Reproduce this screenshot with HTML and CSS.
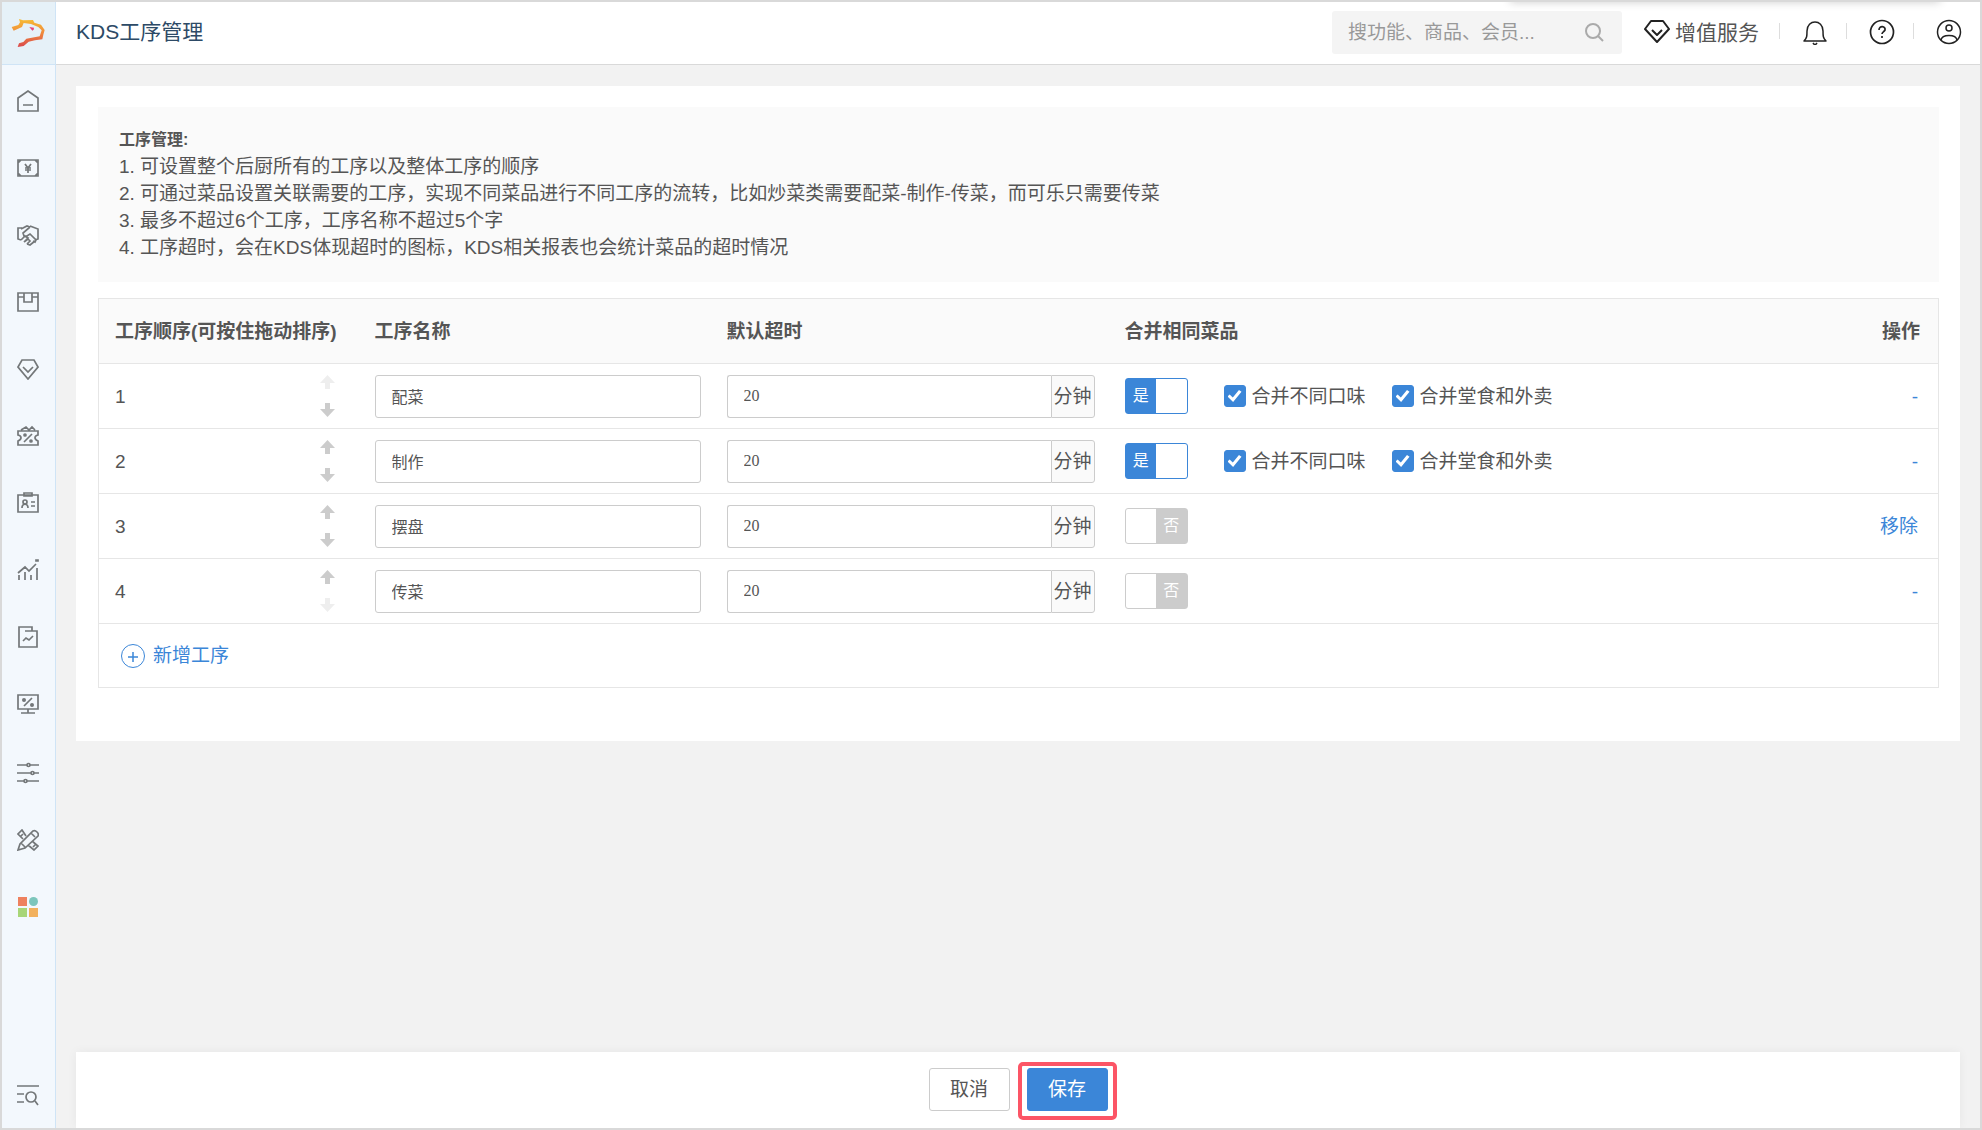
FILE: index.html
```html
<!DOCTYPE html>
<html lang="zh-CN">
<head>
    <meta charset="UTF-8">
    <meta name="viewport" content="width=device-width, initial-scale=1.0">
    <title>KDS工序管理</title>
    <link rel="stylesheet" href="styles.css">
</head>
<body>
    <!-- Sidebar -->
    <aside class="sidebar">
        <a href="#" class="logo" aria-label="首页">
            <svg width="34" height="30" viewBox="0 0 102 90" fill="none" stroke-linejoin="round">
                <defs>
                    <linearGradient id="logoGrad" x1="0" y1="0" x2="0" y2="1">
                        <stop offset="0" stop-color="#f6bd35"/>
                        <stop offset="0.5" stop-color="#f08a3c"/>
                        <stop offset="1" stop-color="#d9484d"/>
                    </linearGradient>
                </defs>
                <path fill="url(#logoGrad)" d="M2 27 L22 21 L27 13 L24 3 L36 7 L66 6 L70 14 L90 20 L101 36 L97 50 L94 64 L72 67 L53 71 L38 84 L20 87 L24 76 L37 72 L46 62 L86 55 L92 37 L82 27 L60 18 L38 15 L33 27 L8 38 Z"/>
                <path fill="#e8457a" d="M55 27 L69 29 L68 35 L64 38 Z"/>
            </svg>
        </a>
        <nav class="side-nav">
            <a href="#" class="side-item" aria-label="首页">
                <svg class="icon" viewBox="0 0 22 22"><path d="M1 21V8L11 1l10 7v13zM6 15h10"/></svg>
            </a>
            <a href="#" class="side-item" aria-label="收银">
                <svg class="icon" viewBox="0 0 22 22"><path d="M1 3h20v16H1zM1 6l3-3M18 3l3 3M1 16l3 3M18 19l3-3M8 7l3 4 3-4M11 11v5M8 11h6M8 13h6"/></svg>
            </a>
            <a href="#" class="side-item" aria-label="合作">
                <svg class="icon" viewBox="0 0 22 22"><path d="M5 4H1v11l3 1M4 5l6-3 3 1M13 2l8 3v10l-3 1M13 3L6 9l1 3h3l3-2 6 6-1 2-2-1M4 16l4-4 3 2-4 4M7 18l4-3 2 2-3 3M10 20l3 1 5-4"/></svg>
            </a>
            <a href="#" class="side-item" aria-label="商品">
                <svg class="icon" viewBox="0 0 22 22"><path d="M1 2h20v18H1zM1 6h6M15 6h6M7 2v9h8V2"/></svg>
            </a>
            <a href="#" class="side-item" aria-label="会员">
                <svg class="icon" viewBox="0 0 22 22"><path d="M5 2h12l4 7-10 12L1 9zM6 9l5 5 5-5"/></svg>
            </a>
            <a href="#" class="side-item" aria-label="优惠券">
                <svg class="icon" viewBox="0 0 22 22"><path d="M1 6h20v4c-4 1-4 4 0 6v4H1v-4c4-2 4-5 0-6zM4 5l5-3 3 3 3-3 3 3M7 17l8-8"/><circle cx="8" cy="10" r="1"/><circle cx="14" cy="16" r="1"/></svg>
            </a>
            <a href="#" class="side-item" aria-label="员工">
                <svg class="icon" viewBox="0 0 22 22"><path d="M1 3h20v17H1zM7 1h8v3H7zM5 16c0-5 6-5 6 0M14 10h4M14 14h4"/><circle cx="8" cy="10" r="2"/></svg>
            </a>
            <a href="#" class="side-item" aria-label="经营分析">
                <svg class="icon" viewBox="0 0 22 22"><path d="M1 14l7-6 4 4 7-7M2 21v-5M8 21v-8M14 21v-5M20 21V9M19 1h2v1h-2z"/></svg>
            </a>
            <a href="#" class="side-item" aria-label="报表">
                <svg class="icon" viewBox="0 0 22 22"><path d="M2 1h13v4h5v16H2zM8 5h8M6 15l3-3 3 2 4-4"/></svg>
            </a>
            <a href="#" class="side-item" aria-label="营销">
                <svg class="icon" viewBox="0 0 22 22"><path d="M1 2h20v14H1zM4 20h14M11 16v4M7 13l8-8"/><circle class="dot" cx="7" cy="7" r="2"/><circle class="dot" cx="15" cy="12" r="2"/></svg>
            </a>
        </nav>
        <nav class="side-nav">
            <a href="#" class="side-item" aria-label="设置">
                <svg class="icon" viewBox="0 0 22 22"><path d="M0 3h10M13 3h9M0 11h14M17 11h5M0 19h7M10 19h12"/><circle cx="11.500" cy="3" r="1.500"/><circle cx="15.500" cy="11" r="1.500"/><circle cx="8.500" cy="19" r="1.500"/></svg>
            </a>
            <a href="#" class="side-item" aria-label="工具">
                <svg class="icon" viewBox="0 0 22 22"><path d="M1 21l2-6L16 2q2-1 4 1t1 4L8 19zM4 14l4 4M14 4l4 4M9 7L5 1 1 5l5 5M3 8l3-3M15 12l6 5-4 4-6-5M16 18l3-3"/></svg>
            </a>
            <a href="#" class="side-item" aria-label="应用">
                <svg width="22" height="22" viewBox="0 0 22 22"><path fill="#ee815f" d="M1 1h9v9H1z"/><circle fill="#7cc6bc" cx="16.500" cy="5.500" r="4.500"/><path fill="#a8d678" d="M1 12h9v9H1z"/><path fill="#f2b15d" d="M12 12h9v9h-9z"/></svg>
            </a>
        </nav>
        <a href="#" class="side-item side-search" aria-label="查找">
            <svg class="icon" viewBox="0 0 22 22"><path d="M0 2h22M0 10h7M0 18h7M18 17l3 4"/><circle cx="14" cy="13" r="5"/></svg>
        </a>
    </aside>

    <div class="page">
        <!-- Header -->
        <header class="topbar">
            <h1 class="page-title">KDS工序管理</h1>
            <form class="search">
                <input type="search" class="search-input" placeholder="搜功能、商品、会员..." aria-label="搜索">
                <button type="button" class="search-btn" aria-label="搜索">
                    <svg width="20" height="20" viewBox="0 0 20 20" fill="none" stroke="#aaa" stroke-width="2"><circle cx="9" cy="9" r="7"/><path d="M14 14l5 5"/></svg>
                </button>
            </form>
            <a href="#" class="vip">
                <svg width="26" height="24" viewBox="0 0 26 24" fill="none" stroke="#222" stroke-width="2" stroke-linejoin="round"><path d="M7 1h12l6 8-12 13L1 9zM8 10l5 5 5-5"/></svg>
                增值服务
            </a>
            <div class="top-actions">
                <button type="button" class="top-btn" aria-label="通知">
                    <svg width="26" height="26" viewBox="0 0 26 26" fill="none" stroke="#222" stroke-width="1.500" stroke-linejoin="round"><path d="M2 22h22c-3-3-3-5-3-10 0-6-4-9-8-9s-8 3-8 9c0 5 0 7-3 10z"/><path d="M11 24q2 3 4 0"/></svg>
                </button>
                <button type="button" class="top-btn" aria-label="帮助">
                    <svg width="26" height="26" viewBox="0 0 26 26" fill="none" stroke="#222" stroke-width="1.700"><circle cx="13" cy="13" r="11.500"/><path d="M10 11c0-5 7-4 6 0-1 2-3 2-3 4M13 17v2"/></svg>
                </button>
                <button type="button" class="top-btn" aria-label="账号">
                    <svg width="26" height="26" viewBox="0 0 26 26" fill="none" stroke="#222" stroke-width="1.500"><circle cx="13" cy="13" r="11.500"/><circle cx="13" cy="9" r="3"/><path d="M5 21c1-6 15-6 16 0"/></svg>
                </button>
            </div>
        </header>

        <main class="content">
            <section class="card">
                <div class="notice">
                    <strong>工序管理:</strong>
                    <p>1. 可设置整个后厨所有的工序以及整体工序的顺序</p>
                    <p>2. 可通过菜品设置关联需要的工序，实现不同菜品进行不同工序的流转，比如炒菜类需要配菜-制作-传菜，而可乐只需要传菜</p>
                    <p>3. 最多不超过6个工序，工序名称不超过5个字</p>
                    <p>4. 工序超时，会在KDS体现超时的图标，KDS相关报表也会统计菜品的超时情况</p>
                </div>

                <table class="steps">
                    <thead>
                        <tr>
                            <th class="col-order">工序顺序(可按住拖动排序)</th>
                            <th class="col-name">工序名称</th>
                            <th class="col-timeout">默认超时</th>
                            <th>合并相同菜品</th>
                            <th class="col-action">操作</th>
                        </tr>
                    </thead>
                    <tbody>
                        <tr>
                            <td>
                                <div class="order">1
                                    <div class="arrows">
                                        <button type="button" class="arrow" aria-label="上移" disabled><svg width="15" height="14" viewBox="0 0 15 14"><path d="M7.500 0L15 8h-5v6H5V8H0z"/></svg></button>
                                        <button type="button" class="arrow" aria-label="下移"><svg width="15" height="14" viewBox="0 0 15 14"><path d="M7.500 14L0 6h5V0h5v6h5z"/></svg></button>
                                    </div>
                                </div>
                            </td>
                            <td><input type="text" class="field" value="配菜" aria-label="工序名称"></td>
                            <td><label class="timeout"><input type="text" class="field" value="20"><span class="unit">分钟</span></label></td>
                            <td>
                                <div class="merge">
                                    <label class="switch"><input type="checkbox" aria-label="合并相同菜品" checked><span class="switch-on">是</span><span class="switch-off">否</span></label>
                                    <label class="check"><input type="checkbox" checked>合并不同口味</label>
                                    <label class="check"><input type="checkbox" checked>合并堂食和外卖</label>
                                </div>
                            </td>
                            <td class="col-action"><span class="action">-</span></td>
                        </tr>
                        <tr>
                            <td>
                                <div class="order">2
                                    <div class="arrows">
                                        <button type="button" class="arrow" aria-label="上移"><svg width="15" height="14" viewBox="0 0 15 14"><path d="M7.500 0L15 8h-5v6H5V8H0z"/></svg></button>
                                        <button type="button" class="arrow" aria-label="下移"><svg width="15" height="14" viewBox="0 0 15 14"><path d="M7.500 14L0 6h5V0h5v6h5z"/></svg></button>
                                    </div>
                                </div>
                            </td>
                            <td><input type="text" class="field" value="制作" aria-label="工序名称"></td>
                            <td><label class="timeout"><input type="text" class="field" value="20"><span class="unit">分钟</span></label></td>
                            <td>
                                <div class="merge">
                                    <label class="switch"><input type="checkbox" aria-label="合并相同菜品" checked><span class="switch-on">是</span><span class="switch-off">否</span></label>
                                    <label class="check"><input type="checkbox" checked>合并不同口味</label>
                                    <label class="check"><input type="checkbox" checked>合并堂食和外卖</label>
                                </div>
                            </td>
                            <td class="col-action"><span class="action">-</span></td>
                        </tr>
                        <tr>
                            <td>
                                <div class="order">3
                                    <div class="arrows">
                                        <button type="button" class="arrow" aria-label="上移"><svg width="15" height="14" viewBox="0 0 15 14"><path d="M7.500 0L15 8h-5v6H5V8H0z"/></svg></button>
                                        <button type="button" class="arrow" aria-label="下移"><svg width="15" height="14" viewBox="0 0 15 14"><path d="M7.500 14L0 6h5V0h5v6h5z"/></svg></button>
                                    </div>
                                </div>
                            </td>
                            <td><input type="text" class="field" value="摆盘" aria-label="工序名称"></td>
                            <td><label class="timeout"><input type="text" class="field" value="20"><span class="unit">分钟</span></label></td>
                            <td>
                                <div class="merge">
                                    <label class="switch"><input type="checkbox" aria-label="合并相同菜品"><span class="switch-on">是</span><span class="switch-off">否</span></label>
                                </div>
                            </td>
                            <td class="col-action"><a href="#" class="action">移除</a></td>
                        </tr>
                        <tr>
                            <td>
                                <div class="order">4
                                    <div class="arrows">
                                        <button type="button" class="arrow" aria-label="上移"><svg width="15" height="14" viewBox="0 0 15 14"><path d="M7.500 0L15 8h-5v6H5V8H0z"/></svg></button>
                                        <button type="button" class="arrow" aria-label="下移" disabled><svg width="15" height="14" viewBox="0 0 15 14"><path d="M7.500 14L0 6h5V0h5v6h5z"/></svg></button>
                                    </div>
                                </div>
                            </td>
                            <td><input type="text" class="field" value="传菜" aria-label="工序名称"></td>
                            <td><label class="timeout"><input type="text" class="field" value="20"><span class="unit">分钟</span></label></td>
                            <td>
                                <div class="merge">
                                    <label class="switch"><input type="checkbox" aria-label="合并相同菜品"><span class="switch-on">是</span><span class="switch-off">否</span></label>
                                </div>
                            </td>
                            <td class="col-action"><span class="action">-</span></td>
                        </tr>
                    </tbody>
                    <tfoot>
                        <tr>
                            <td colspan="5">
                                <button type="button" class="add-btn">
                                    <svg width="26" height="26" viewBox="0 0 26 26" fill="none" stroke="#3b86d8"><circle cx="13" cy="13" r="11.500"/><path stroke-width="1.500" d="M8 14h10M13 9v10"/></svg>
                                    新增工序
                                </button>
                            </td>
                        </tr>
                    </tfoot>
                </table>
            </section>
        </main>

        <!-- Footer -->
        <footer class="footer">
            <button type="button" class="btn">取消</button>
            <div class="highlight">
                <button type="submit" class="btn btn-primary">保存</button>
            </div>
        </footer>
    </div>
</body>
</html>
```

FILE: styles.css
```css
:root {
    --blue: #3b86d8;
    --text: #555;
    --line: #e6e6e6;
    --field-line: #ccc;
    --page-bg: #f2f2f2;
    --soft-bg: #fafafa;
}

* {
    box-sizing: border-box;
}

body {
    margin: 0;
    display: flex;
    min-height: 100vh;
    border: 2px solid #d9d9d9;
    background: var(--page-bg);
    color: var(--text);
    font-family: "Liberation Sans", "Noto Sans CJK SC", sans-serif;
    font-size: 19px;
    line-height: 27px;
}

a {
    color: inherit;
    text-decoration: none;
}

button,
input {
    font: inherit;
    color: inherit;
}

button {
    padding: 0;
    border: none;
    background: none;
    cursor: pointer;
}

svg {
    display: block;
    flex: none;
}

/* Sidebar */
.sidebar {
    flex: none;
    width: 54px;
    display: flex;
    flex-direction: column;
    background: #f3f8fd;
    border-right: 1px solid #cfe4f6;
}

.logo {
    display: flex;
    align-items: center;
    justify-content: center;
    height: 63px;
    padding-right: 1px;
    background: #e6f1f8;
    border-bottom: 1px solid #cfe4f6;
}

.side-nav {
    margin-top: 2px;
}

.side-item {
    display: flex;
    align-items: center;
    justify-content: center;
    height: 67px;
    padding-right: 1px;
}

.side-search {
    margin-top: auto;
}

.icon {
    width: 22px;
    height: 22px;
    fill: none;
    stroke: #737779;
    stroke-width: 1.7;
}

.icon .dot {
    fill: #737779;
    stroke: none;
}

.page {
    flex: 1;
    min-width: 0;
    display: flex;
    flex-direction: column;
}

/* Header */
.topbar {
    position: relative;
    display: flex;
    align-items: center;
    height: 63px;
    padding: 0 0 2px 20px;
    background: #fff;
    border-bottom: 1px solid #d9d9d9;
    overflow: hidden;
}

.topbar::before {
    content: '';
    position: absolute;
    right: 40px;
    bottom: 100%;
    width: 430px;
    height: 10px;
    box-shadow: 0 0 10px rgba(0, 0, 0, 0.2);
}

.page-title {
    margin: 0;
    padding-bottom: 2px;
    color: #2d4a66;
    font-size: 21px;
    font-weight: normal;
}

.search {
    display: flex;
    align-items: center;
    width: 290px;
    height: 43px;
    margin-left: auto;
    padding: 0 18px 0 16px;
    background: #f4f4f4;
    border-radius: 3px;
}

.search-input {
    flex: 1;
    min-width: 0;
    padding: 0;
    border: none;
    outline: none;
    background: none;
}

.search-input::placeholder {
    color: #999;
}

.vip {
    display: flex;
    align-items: center;
    gap: 5px;
    margin: 0 20px 0 22px;
    font-size: 21px;
}

.top-actions {
    display: flex;
}

.top-btn {
    position: relative;
    display: flex;
    align-items: center;
    justify-content: center;
    width: 67px;
    height: 26px;
    padding-left: 4px;
}

.top-btn::before {
    content: '';
    position: absolute;
    left: 0;
    top: 4px;
    width: 1px;
    height: 16px;
    background: #ddd;
}

/* Content */
.content {
    flex: 1;
    padding: 21px 20px;
}

.card {
    padding: 21px 21px 53px 22px;
    background: #fff;
}

.notice {
    margin-bottom: 16px;
    padding: 19px 21px 21px;
    background: var(--soft-bg);
}

.notice strong {
    display: block;
    font-size: 16px;
}

.notice p {
    margin: 0;
}

/* Steps table */
.steps {
    width: 100%;
    table-layout: fixed;
    border-collapse: collapse;
    border: 1px solid var(--line);
}

.steps th,
.steps td {
    height: 65px;
    padding: 0 10px 0 16px;
    border-bottom: 1px solid var(--line);
    text-align: left;
}

.steps th {
    background: var(--soft-bg);
    white-space: nowrap;
}

.steps tfoot td {
    height: 64px;
}

.steps .col-order {
    width: 260px;
}

.steps .col-name {
    width: 352px;
}

.steps .col-timeout {
    width: 398px;
}

.steps .col-action {
    padding-right: 18px;
    text-align: right;
}

.order {
    display: flex;
    align-items: center;
    justify-content: space-between;
    padding-right: 14px;
}

.arrows {
    display: flex;
    flex-direction: column;
    gap: 14px;
}

.arrow {
    fill: #ccc;
}

.arrow:disabled {
    fill: #eee;
    cursor: default;
}

.field {
    display: block;
    width: 100%;
    height: 43px;
    padding: 0 16px;
    border: 1px solid var(--field-line);
    border-radius: 3px;
    background: #fff;
    font-family: "Liberation Serif", "Noto Sans CJK SC", serif;
    font-size: 16px;
}

.timeout {
    display: flex;
    margin-right: 4px;
}

.timeout .field {
    flex: 1;
    min-width: 0;
    border-right: none;
    border-radius: 3px 0 0 3px;
}

.unit {
    width: 44px;
    height: 43px;
    border: 1px solid var(--field-line);
    border-radius: 0 3px 3px 0;
    background: var(--soft-bg);
    line-height: 41px;
    text-align: center;
    white-space: nowrap;
}

.merge {
    display: flex;
    align-items: center;
    white-space: nowrap;
}

.switch {
    position: relative;
    display: flex;
    flex: none;
    width: 63px;
    height: 36px;
    margin-right: 36px;
    border: 1px solid var(--field-line);
    border-radius: 3px;
    background: #fff;
    cursor: pointer;
}

.switch input {
    position: absolute;
    inset: 0;
    width: 100%;
    height: 100%;
    margin: 0;
    opacity: 0;
}

.switch span {
    width: 50%;
    color: #fff;
    font-size: 16px;
    line-height: 34px;
    text-align: center;
    visibility: hidden;
}

.switch-on {
    background: var(--blue);
}

.switch-off {
    background: #ccc;
}

.switch:has(input:checked) {
    border-color: var(--blue);
}

.switch input:checked ~ .switch-on,
.switch input:not(:checked) ~ .switch-off {
    visibility: visible;
}

.check {
    display: flex;
    flex: none;
    align-items: center;
    gap: 6px;
    margin-right: 26px;
}

/* labels may run past the column into the empty part of the action cell */
.check:last-child {
    margin-right: 0;
}

.check input {
    appearance: none;
    width: 22px;
    height: 22px;
    margin: 0;
    border: 1px solid var(--field-line);
    border-radius: 3px;
}

.check input:checked {
    border-color: var(--blue);
    background: var(--blue);
}

.check input:checked::before {
    content: '';
    display: block;
    width: 14px;
    height: 12px;
    margin: 4px 3px;
    background: #fff;
    clip-path: polygon(0 55%, 15% 38%, 38% 62%, 82% 0, 100% 15%, 40% 100%);
}

.action {
    padding-right: 2px;
    color: var(--blue);
}

.add-btn {
    display: flex;
    align-items: center;
    gap: 7px;
    margin-left: 5px;
    color: var(--blue);
}

/* Footer */
.footer {
    display: flex;
    justify-content: center;
    gap: 17px;
    height: 76px;
    margin: 0 20px;
    padding-top: 16px;
    background: #fff;
    box-shadow: 0 0 10px rgba(0, 0, 0, 0.05);
}

.btn {
    width: 81px;
    height: 43px;
    border: 1px solid var(--field-line);
    border-radius: 3px;
    background: #fff;
}

.btn-primary {
    border-color: var(--blue);
    background: var(--blue);
    color: #fff;
}

.highlight {
    position: relative;
    height: 43px;
}

.highlight::after {
    content: '';
    position: absolute;
    inset: -6px -9px -9px;
    border: 4px solid #fc5566;
    border-radius: 5px;
    pointer-events: none;
}
```
